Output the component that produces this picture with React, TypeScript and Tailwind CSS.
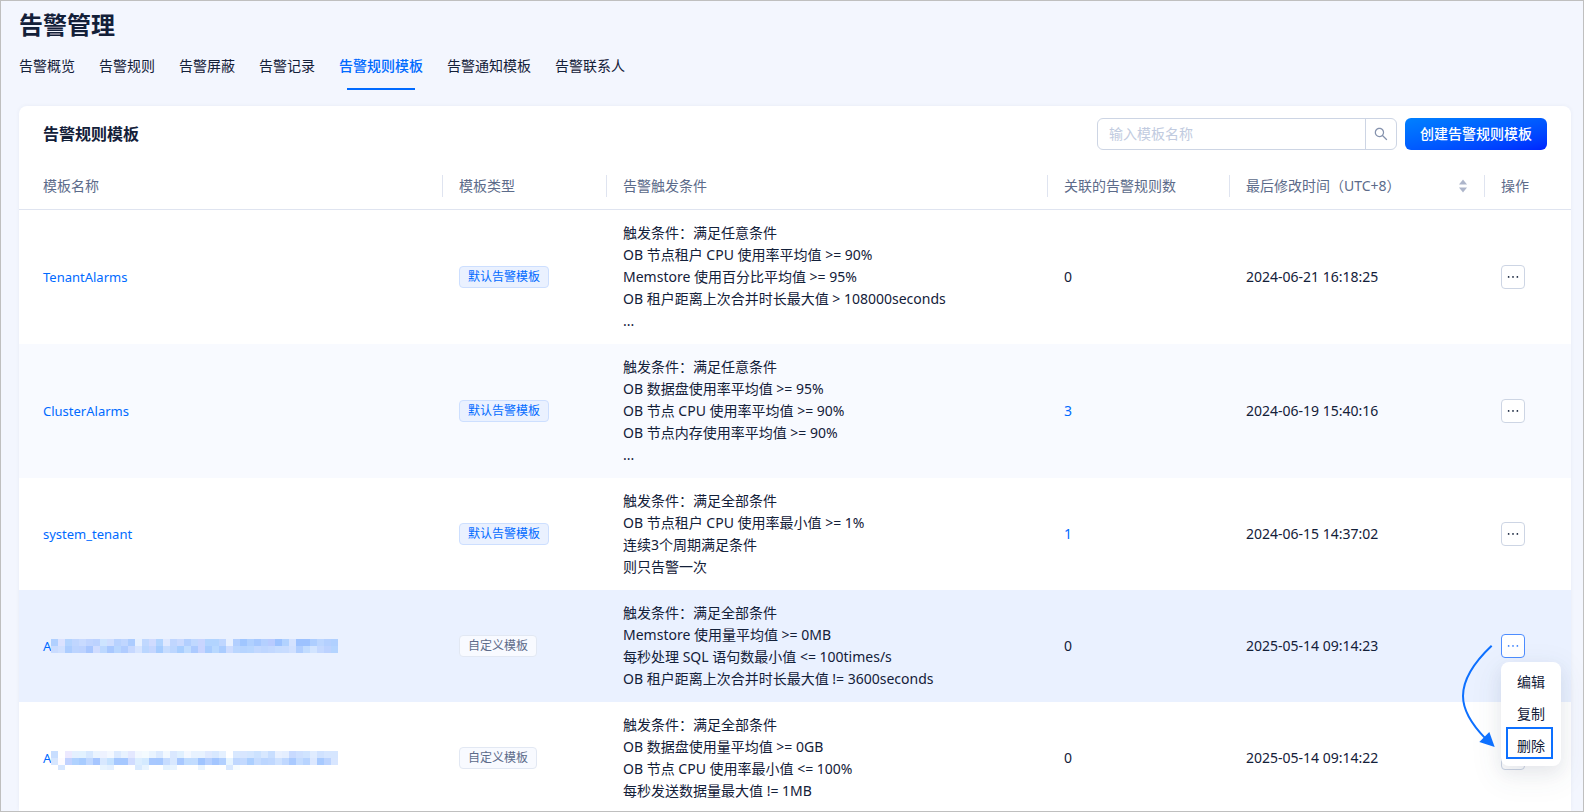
import React, { useState } from 'react';
import { AiOutlineEllipsis, AiOutlineSearch } from 'react-icons/ai';
import { clsx } from 'clsx';

interface Template {
    id: number;
    name: string;
    mosaic?: string[][];
    custom?: boolean;
    conditions: string[];
    rules: number;
    updated: string;
}

const tabs = ['告警概览', '告警规则', '告警屏蔽', '告警记录', '告警规则模板', '告警通知模板', '告警联系人'];

// Colour cells that hide the rest of a template name, '-' is an empty cell
const mosaicA = [
    'b0d0ff dbe2ff b4d4ff c0d6ff c8daff c0d4ff bcd2ff cde4ff cfdeff b8d2ff c0d6ff acccff e6f0ff c0d8ff d0dbff b2d4ff dfe8ff c0d6ff cadaff b2cfff c0d8ff c8d5ff b2d4ff b2d4ff bfd6ff e8f0ff b2cfff a0c6ff b0d0ff a6c8ff b4d0ff b8cbff 9cc2ff b2d2ff d4e2ff 9dc2ff 9dc2ff aeceff bcd6ff b4d0ff b0d0ff',
    'cadcff d0e0ff accdff bcd4ff bcd2ff a8c6ff d0dcff bcd8ff a8c8ff b8d6ff b0ccff c6d8ff d6e4ff bad6ff c4d6ff a6ccff c6dcff bcd6ff a8ceff c0dcff accaff c8d4ff a8ccff b8d8ff aaccff cddcff bad6ff b6d4ff b8d6ff c2d8ff bed6ff c2d8ff c6dcff c8dcff d0e0ff b0ceff c2dcff d2e4ff c4d8ff bcd2ff b4d4ff',
].map((row) => row.split(' '));

const mosaicB = [
    'c8deff - ece9ff e4f0ff e2f2ff d6e8ff eaf4ff eef2ff f4f8ff dceaff e8f2ff e4e8ff f2f8ff f4fbff eaf4ff dceaff f2f8ff dae8ff e0f0ff f4f8ff e8f2ff e8f2ff dfe9ff d8e8ff e4f0ff - d8e8ff d8e6ff d4e6ff cce2ff d8e8ff c8deff e8f0ff e4eeff c8daff cee0ff d0e4ff e0ecff d0e2ff d6e6ff d6e6ff',
    'd6e6ff fdfbff c2d2ff b0d2ff a8ccff c0d8ff a6c6ff d8e8ff c6e2ff a6c8ff a6c8ff d0dcff dceeff d4eaff a8c8ff a6c8ff c6dcff d8e8ff a8c8ff c0dcff c2dcff a0c4ff b6d0ff a4c6ff b2d0ff e6f4ff c0d8ff c4daff accfff c6dcff bcd6ff c0d8ff cfe2ff c0d8ff aacaff c4dcff b8d4ff dce8ff a8caff bcd4ff d8e6ff',
    '- d6e6ff - - - - - e8f4ff e4f0ff - - - d8eaff e8f4ff - - e4f2ff e8f4ff - - - eaf4ff - - - d8e8ff f6fcff - - - - - - - - - - - - - -',
].map((row) => row.split(' '));

const templates: Template[] = [
    {
        id: 1,
        name: 'TenantAlarms',
        conditions: [
            '触发条件：满足任意条件',
            'OB 节点租户 CPU 使用率平均值 >= 90%',
            'Memstore 使用百分比平均值 >= 95%',
            'OB 租户距离上次合并时长最大值 > 108000seconds',
            '...',
        ],
        rules: 0,
        updated: '2024-06-21 16:18:25',
    },
    {
        id: 2,
        name: 'ClusterAlarms',
        conditions: [
            '触发条件：满足任意条件',
            'OB 数据盘使用率平均值 >= 95%',
            'OB 节点 CPU 使用率平均值 >= 90%',
            'OB 节点内存使用率平均值 >= 90%',
            '...',
        ],
        rules: 3,
        updated: '2024-06-19 15:40:16',
    },
    {
        id: 3,
        name: 'system_tenant',
        conditions: ['触发条件：满足全部条件', 'OB 节点租户 CPU 使用率最小值 >= 1%', '连续3个周期满足条件', '则只告警一次'],
        rules: 1,
        updated: '2024-06-15 14:37:02',
    },
    {
        id: 4,
        name: 'A',
        mosaic: mosaicA,
        custom: true,
        conditions: [
            '触发条件：满足全部条件',
            'Memstore 使用量平均值 >= 0MB',
            '每秒处理 SQL 语句数最小值 <= 100times/s',
            'OB 租户距离上次合并时长最大值 != 3600seconds',
        ],
        rules: 0,
        updated: '2025-05-14 09:14:23',
    },
    {
        id: 5,
        name: 'A',
        mosaic: mosaicB,
        custom: true,
        conditions: [
            '触发条件：满足全部条件',
            'OB 数据盘使用量平均值 >= 0GB',
            'OB 节点 CPU 使用率最小值 <= 100%',
            '每秒发送数据量最大值 != 1MB',
        ],
        rules: 0,
        updated: '2025-05-14 09:14:22',
    },
];

function Mosaic({ rows }: { rows: string[][] }) {
    return (
        <svg width="287" height="20" viewBox="0 0 287 20" shapeRendering="crispEdges" aria-hidden="true">
            {rows.map((row, y) =>
                row.map((color, x) =>
                    color === '-' ? null : (
                        <rect key={`${x}-${y}`} x={x * 7} y={y * 7} width="7" height={y === 2 ? 5 : 7} fill={`#${color}`} />
                    )
                )
            )}
        </svg>
    );
}

function HeaderCell({ children, divider = true, className }: { children: React.ReactNode; divider?: boolean; className?: string }) {
    return (
        <th className={clsx('h-12 border-b border-[#dfe4f0] p-0 text-left font-normal text-[#5c6b8a]', className)}>
            <div className={clsx('flex h-[22px] items-center justify-between pr-4', divider && 'border-r border-[#dfe4f0]')}>
                {children}
            </div>
        </th>
    );
}

function ActionMenu() {
    return (
        <>
            <ul className="absolute top-7 left-0 z-10 w-[60px] rounded-lg bg-white py-1 shadow-[0_6px_16px_rgba(54,69,99,0.08),0_9px_28px_8px_rgba(54,69,99,0.05)]">
                {['编辑', '复制', '删除'].map((item) => (
                    <li key={item}>
                        <button className="block h-8 w-full text-center text-[#132039]">{item}</button>
                    </li>
                ))}
            </ul>
            <div className="pointer-events-none absolute top-[93px] left-[5px] z-20 h-8 w-[47px] border-2 border-[#0d70ff]" />
            <svg className="pointer-events-none absolute top-[10px] -left-[41px] z-20" width="36" height="105" viewBox="228 132 108 315" aria-hidden="true">
                <path d="M323 137C270 187 237 236 237 288C237 334 264 374 304 415" fill="none" stroke="#0d70ff" strokeWidth="6" />
                <path d="M332 441L316 396L286 426Z" fill="#0d70ff" />
            </svg>
        </>
    );
}

export default function App() {
    const [activeTab, setActiveTab] = useState('告警规则模板');
    const [openMenu, setOpenMenu] = useState(4);

    return (
        <div className="h-screen overflow-hidden border border-[#bfbfbf] bg-[#f3f6fe] pr-3 pl-[18px] font-['Noto_Sans','Noto_Sans_CJK_SC',sans-serif] text-sm leading-[22px] text-[#132039]">
            <h1 className="pt-2 text-2xl leading-8 font-bold">告警管理</h1>
            <nav className="mt-[2px] flex gap-6">
                {tabs.map((tab) => (
                    <button
                        key={tab}
                        onClick={() => setActiveTab(tab)}
                        className={clsx('relative pt-3 pb-[13px]', tab === activeTab && 'font-medium text-[#006aff]')}
                    >
                        {tab}
                        {tab === activeTab && <span className="absolute inset-x-2 bottom-0 h-[2px] bg-[#006aff]" />}
                    </button>
                ))}
            </nav>

            <main className="mt-4 rounded-lg bg-white shadow-[0_0_4px_rgba(54,69,99,0.06)]">
                <div className="flex items-center justify-between px-6 py-3">
                    <h2 className="text-base leading-6 font-bold">告警规则模板</h2>
                    <div className="flex gap-2">
                        <div className="flex h-8 w-[300px] rounded-md border border-[#cdd5e4]">
                            <input
                                aria-label="输入模板名称"
                                placeholder="输入模板名称"
                                className="min-w-0 flex-1 px-[11px] outline-none placeholder:text-[#c1cbe0]"
                            />
                            <button aria-label="搜索" className="flex w-[31px] items-center justify-center border-l border-[#cdd5e4] text-[#8592ad]">
                                <AiOutlineSearch className="size-4" />
                            </button>
                        </div>
                        <button className="h-8 rounded-md bg-linear-to-br from-[#0080ff] to-[#0022ff] px-[15px] font-medium text-white">
                            创建告警规则模板
                        </button>
                    </div>
                </div>

                <table className="w-full table-fixed border-separate border-spacing-0">
                    <colgroup>
                        <col className="w-[424px]" />
                        <col className="w-[164px]" />
                        <col />
                        <col className="w-[182px]" />
                        <col className="w-[255px]" />
                        <col className="w-[86px]" />
                    </colgroup>
                    <thead>
                        <tr>
                            <HeaderCell className="pl-6">模板名称</HeaderCell>
                            <HeaderCell className="pl-4">模板类型</HeaderCell>
                            <HeaderCell className="pl-4">告警触发条件</HeaderCell>
                            <HeaderCell className="pl-4">关联的告警规则数</HeaderCell>
                            <HeaderCell className="pl-4">
                                最后修改时间（UTC+8）
                                <button aria-label="排序">
                                    <svg width="10" height="14" viewBox="0 0 10 14" fill="#adb5ca" aria-hidden="true">
                                        <path d="M5 0.5L9 5.5H1Z" />
                                        <path d="M5 13.5L9 8.5H1Z" />
                                    </svg>
                                </button>
                            </HeaderCell>
                            <HeaderCell className="pl-4" divider={false}>操作</HeaderCell>
                        </tr>
                    </thead>
                    <tbody>
                        {templates.map((template, index) => {
                            const open = template.id === openMenu;
                            return (
                                <tr key={template.id} className={clsx(open ? 'bg-[#eaf1ff]' : index === 1 ? 'bg-[#f8faff]' : 'bg-white')}>
                                    <td className="py-3 pr-4 pl-6">
                                        <a href="#" className="flex items-center text-[13px] text-[#006aff]">
                                            {template.name}
                                            {template.mosaic && (
                                                <span className="flex h-[14px] items-start">
                                                    <Mosaic rows={template.mosaic} />
                                                </span>
                                            )}
                                        </a>
                                    </td>
                                    <td className="px-4 py-3">
                                        <span
                                            className={clsx(
                                                'block w-fit rounded border px-2 text-xs leading-5',
                                                template.custom
                                                    ? 'border-[#e2e8f3] bg-[#f8faff] text-[#5c6b8a]'
                                                    : 'border-[#cddfff] bg-[#eaf1ff] text-[#006aff]'
                                            )}
                                        >
                                            {template.custom ? '自定义模板' : '默认告警模板'}
                                        </span>
                                    </td>
                                    <td className="px-4 py-3">
                                        {template.conditions.map((line) => (
                                            <div key={line}>{line}</div>
                                        ))}
                                    </td>
                                    <td className="px-4 py-3">
                                        {template.rules > 0 ? <a href="#" className="text-[#006aff]">{template.rules}</a> : template.rules}
                                    </td>
                                    <td className="px-4 py-3">{template.updated}</td>
                                    <td className="px-4 py-3">
                                        <div className="relative size-6">
                                            <button
                                                aria-label="更多操作"
                                                onClick={() => setOpenMenu(open ? 0 : template.id)}
                                                className={clsx(
                                                    'flex size-6 items-center justify-center rounded border bg-white',
                                                    open ? 'border-[#4d8dff] text-[#3d84ff]' : 'border-[#cdd5e4] text-[#132039]'
                                                )}
                                            >
                                                <AiOutlineEllipsis className="size-4" />
                                            </button>
                                            {open && <ActionMenu />}
                                        </div>
                                    </td>
                                </tr>
                            );
                        })}
                    </tbody>
                </table>
            </main>
        </div>
    );
}
